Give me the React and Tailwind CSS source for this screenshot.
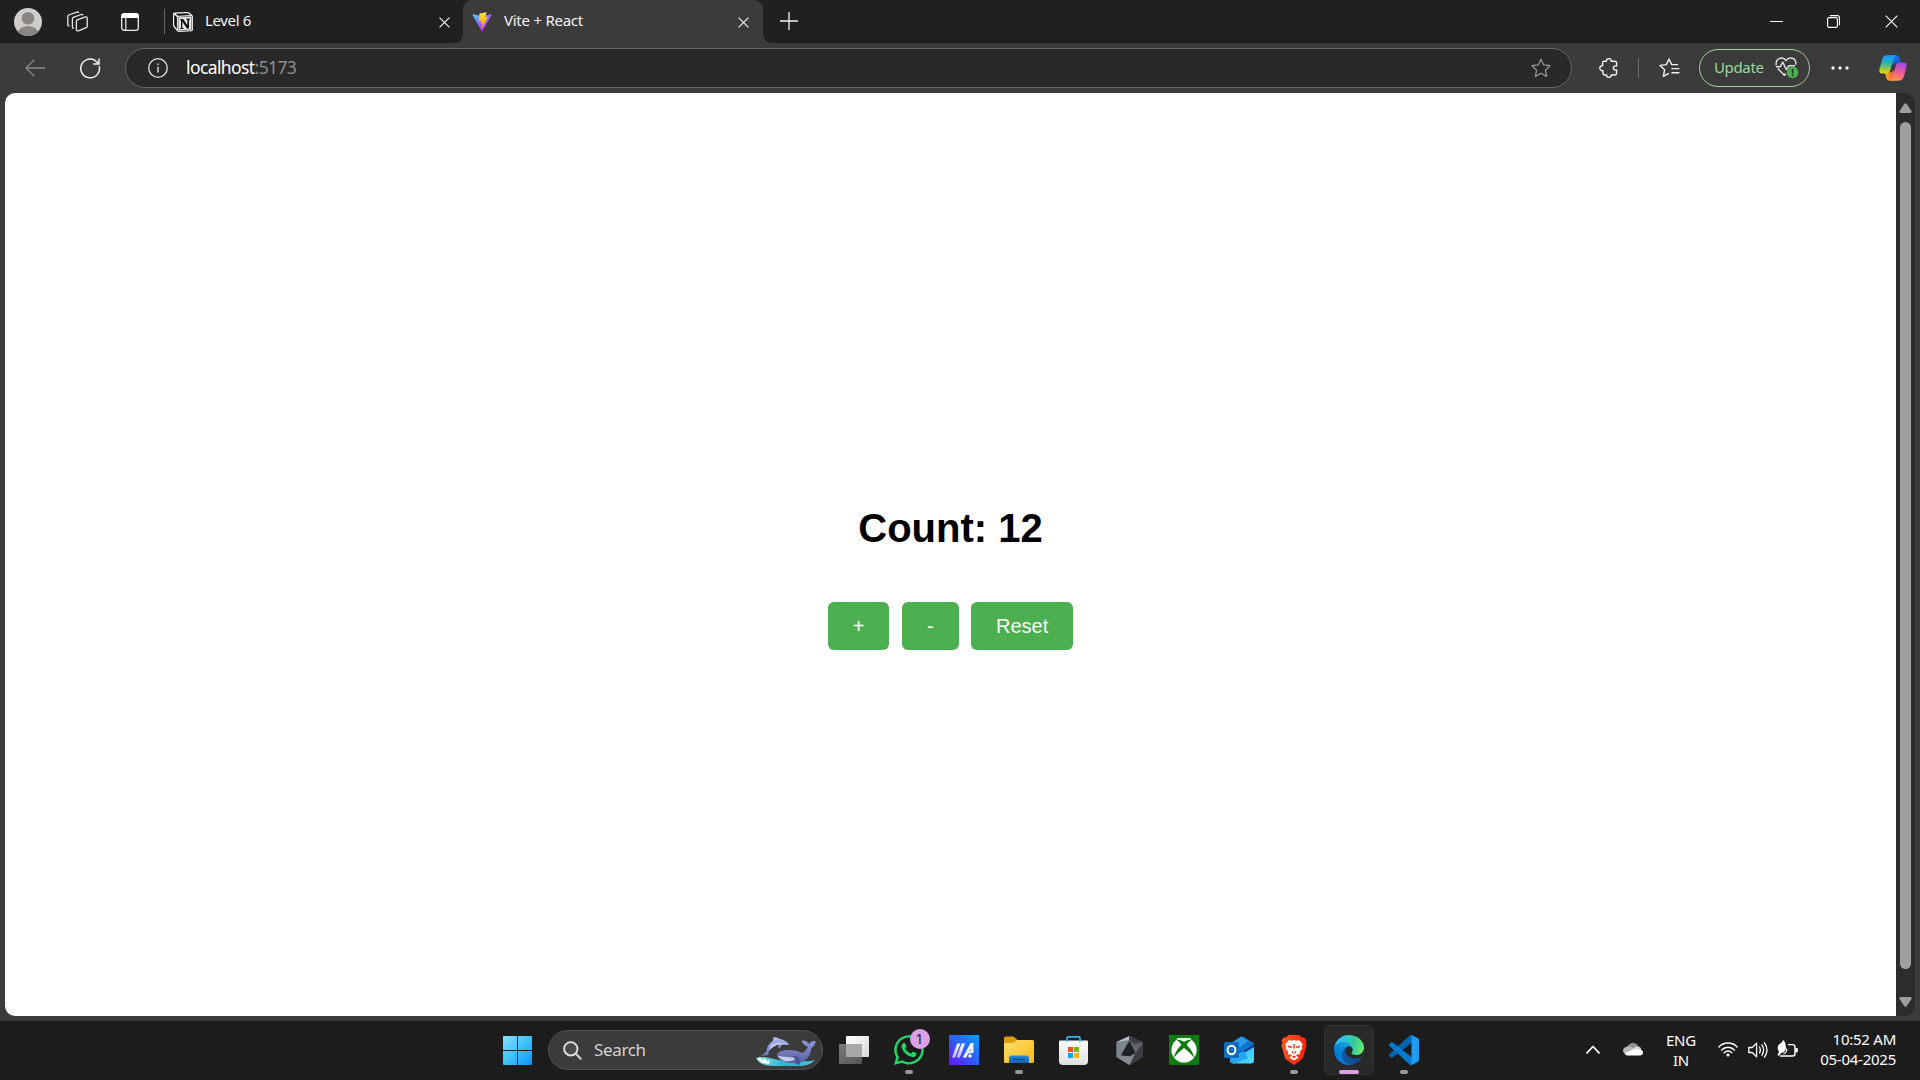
import React from "react";
import { FaWhatsapp } from "react-icons/fa";

const UI = "font-['Noto_Sans','Open_Sans',sans-serif]";

function XIcon({ size = 11, w = 1.3 }) {
  return (
    <svg width={size} height={size} viewBox="0 0 12 12" fill="none" stroke="#f2f2f2" strokeWidth={w} className="block">
      <path d="M0.6 0.6L11.4 11.4M11.4 0.6L0.6 11.4" />
    </svg>
  );
}

function NotionLogo() {
  return (
    <svg width="20" height="20" viewBox="0 0 20 20" className="block shrink-0">
      <path d="M1.500 0.500L14 0Q15.300 0 16.200 0.600L19.200 2.900Q20 3.500 20 4.600V17.500Q20 19.200 18.300 19.300L6 20Q4.800 20 4 19.100L0.700 15Q0 14.100 0 13V2Q0 0.700 1.500 0.500Z" fill="#f7f7f7" />
      <path d="M2.200 1.800L13.800 1.200Q14.600 1.200 15.200 1.600L17.300 3L5.600 3.700Q4.900 3.700 4.300 3.300Z" fill="#111" />
      <path d="M1.200 2.800L3.500 4.600Q3.900 5 3.900 5.700V17L1.600 14.100Q1.200 13.600 1.200 13Z" fill="#111" />
      <path d="M5.200 5.600Q5.200 5 5.900 5L18 4.300Q18.700 4.300 18.700 5V17.300Q18.700 18 18 18L6 18.700Q5.200 18.700 5.200 18Z" fill="#e9e9e9" stroke="#111" strokeWidth="0.500" />
      <path d="M7 7.200L10.200 7L14.400 13.200V7.800L13.100 7.500V6.800L17 6.500V7.300L16 7.700V16.200L14.100 16.600L9.300 9.700V15.800L10.800 16.100V16.800L6.900 17V16.300L8 15.900V8.300L7 8Z" fill="#0b0b0b" />
    </svg>
  );
}

function ViteLogo() {
  return (
    <svg width="20" height="20" viewBox="0 0 410 404" className="block">
      <defs>
        <linearGradient id="va" x1="6" y1="33" x2="235" y2="344" gradientUnits="userSpaceOnUse">
          <stop stopColor="#41D1FF" />
          <stop offset="1" stopColor="#BD34FE" />
        </linearGradient>
        <linearGradient id="vb" x1="194" y1="9" x2="236" y2="293" gradientUnits="userSpaceOnUse">
          <stop stopColor="#FFEA83" />
          <stop offset="0.08" stopColor="#FFDD35" />
          <stop offset="1" stopColor="#FFA800" />
        </linearGradient>
      </defs>
      <path fill="url(#va)" d="M399.641 59.5246L215.643 388.545C211.844 395.338 202.084 395.378 198.228 388.618L10.5817 59.5563C6.38087 52.1896 12.6802 43.2665 21.0281 44.7586L205.223 77.6824C206.398 77.8924 207.601 77.8904 208.776 77.6763L389.119 44.8058C397.439 43.2894 403.768 52.1434 399.641 59.5246Z" />
      <path fill="url(#vb)" d="M292.965 1.5744L156.801 28.2552C154.563 28.6937 152.906 30.5903 152.771 32.8664L144.395 174.33C144.198 177.662 147.258 180.248 150.51 179.498L188.42 170.749C191.967 169.931 195.172 173.055 194.443 176.622L183.18 231.775C182.422 235.487 185.907 238.661 189.532 237.56L212.947 230.446C216.577 229.344 220.065 232.527 219.297 236.242L201.398 322.875C200.278 328.294 207.486 331.249 210.492 326.603L212.5 323.5L323.454 102.072C325.312 98.3645 322.108 94.137 318.036 94.9228L279.014 102.454C275.347 103.161 272.227 99.746 273.262 96.1583L298.731 7.86689C299.767 4.27314 296.636 0.855181 292.965 1.5744Z" />
    </svg>
  );
}

function TabStrip() {
  return (
    <div className={`flex h-[43px] bg-[#202020] text-[15px] text-[#f3f3f3] ${UI}`}>
      <div className="flex w-[164px] items-center pl-[14px]">
        <svg width="28" height="28" viewBox="0 0 28 28" className="mr-[25px] shrink-0">
          <defs><clipPath id="avatar"><circle cx="14" cy="14" r="14" /></clipPath></defs>
          <g clipPath="url(#avatar)">
            <rect width="28" height="28" fill="#cfcdca" />
            <circle cx="14" cy="10.3" r="6.3" fill="#8a8683" />
            <ellipse cx="14" cy="26" rx="10.5" ry="8" fill="#8a8683" />
          </g>
        </svg>
        <svg width="21" height="21" viewBox="0 0 21 21" fill="none" stroke="#e8e8e8" strokeWidth="1.3" strokeLinejoin="round" className="mr-[33px] shrink-0">
          <path d="M9.4 10.2Q9.4 9.2 10.3 8.8L18.4 5.9Q20.2 5.5 20.2 7V15.2Q20.2 16.3 19.2 16.7L11.4 19.8Q9.4 20.3 9.4 18.6Z" />
          <path d="M6.9 17.2Q5.4 17.5 5.4 16V7.8Q5.4 6.8 6.3 6.4L14.2 3.5Q15.6 3.2 15.9 4.3" />
          <path d="M2.6 14.9Q0.8 15.2 0.8 13.4V5.4Q0.8 4.4 1.8 4L9.8 1.1Q11.4 0.7 11.8 1.9" />
        </svg>
        <svg width="18" height="18" viewBox="0 0 18 18" fill="none" className="shrink-0">
          <rect x="0.7" y="0.7" width="16.6" height="16.6" rx="2.6" stroke="#eee" strokeWidth="1.3" />
          <path d="M0.3 5V3Q0.3 0.3 3 0.3H15Q17.7 0.3 17.7 3V5Z" fill="#fff" />
          <path d="M4.8 5V17" stroke="#eee" strokeWidth="1.2" />
        </svg>
      </div>
      <div className="mt-[9px] h-[25px] w-px bg-[#6a6a6a]" />
      <div className="flex w-[298px] items-center pl-[8px]">
        <NotionLogo />
        <span className="-mt-[3px] ml-[12px] tracking-[-0.35px]">Level 6</span>
        <span className="mr-[13px] ml-auto mt-px"><XIcon /></span>
      </div>
      <div className="relative flex w-[300px] items-center rounded-t-[9px] bg-[#3b3b3b] pl-[9px]">
        <svg width="10" height="10" viewBox="0 0 10 10" className="absolute bottom-0 -left-[10px]"><path d="M10 0V10H0Q10 10 10 0Z" fill="#3b3b3b" /></svg>
        <svg width="10" height="10" viewBox="0 0 10 10" className="absolute -right-[10px] bottom-0"><path d="M0 0V10H10Q0 10 0 0Z" fill="#3b3b3b" /></svg>
        <ViteLogo />
        <span className="-mt-[3px] ml-[12px] tracking-[-0.25px]">Vite + React</span>
        <span className="mr-[14px] ml-auto mt-px"><XIcon /></span>
      </div>
      <div className="flex flex-1 items-center pl-[17px]">
        <svg width="18" height="18" viewBox="0 0 18 18" stroke="#f0f0f0" strokeWidth="1.3" className="-mt-px"><path d="M9 0V18M0 9H18" /></svg>
      </div>
      <div className="flex items-center pr-[22px]">
        <div className="mr-[44px] h-px w-[13px] bg-white" />
        <svg width="13" height="13" viewBox="0 0 13 13" fill="none" stroke="#fff" strokeWidth="1.1" className="mr-[45px]">
          <rect x="0.6" y="2.6" width="9.8" height="9.8" rx="1.5" />
          <path d="M2.8 0.6H10.4Q12.4 0.6 12.4 2.6V10.2" />
        </svg>
        <XIcon size={13} w={1.1} />
      </div>
    </div>
  );
}

const STAR = "M10 1.2L12.7 6.9L19 7.7L14.4 12.1L15.6 18.4L10 15.3L4.4 18.4L5.6 12.1L1 7.7L7.3 6.9Z";

function Copilot() {
  return (
    <svg width="28" height="26" viewBox="0 0 28 26" className="block">
      <defs>
        <linearGradient id="c1" x1="0" y1="0" x2="0" y2="1">
          <stop offset="0.1" stopColor="#1a9cf5" /><stop offset="0.45" stopColor="#2fb6a8" /><stop offset="0.75" stopColor="#9bc83c" /><stop offset="1" stopColor="#f5d60c" />
        </linearGradient>
        <linearGradient id="c2" x1="0.6" y1="0" x2="0.3" y2="1">
          <stop offset="0" stopColor="#a04be8" /><stop offset="0.5" stopColor="#ee5a96" /><stop offset="1" stopColor="#ff9a4d" />
        </linearGradient>
        <linearGradient id="c3" x1="0" y1="0" x2="1" y2="1">
          <stop offset="0" stopColor="#1b8ff0" /><stop offset="1" stopColor="#1a3fc4" />
        </linearGradient>
        <linearGradient id="c4" x1="0" y1="0" x2="1" y2="0">
          <stop offset="0" stopColor="#ffb02e" /><stop offset="1" stopColor="#f0503c" />
        </linearGradient>
      </defs>
      <path d="M14 0.3H17.5Q20 0.3 20.7 3L22 8H17Q14.6 8 13.8 10.5L12 7Z" fill="url(#c3)" />
      <path d="M14 25.7H10.5Q8 25.7 7.3 23L6 17.5H11Q13.4 17.5 14.2 15L16 19Z" fill="url(#c4)" />
      <path d="M8 0.3H17Q15.2 1 14.4 3.8L11.4 14.6Q10.4 18.6 7.4 18.6H3.4Q-0.6 18.6 0.5 14L3.1 4.4Q4.3 0.3 8 0.3Z" fill="url(#c1)" />
      <path d="M20 25.7H11Q12.8 25 13.6 22.2L16.6 11.4Q17.6 7.4 20.6 7.4H24.6Q28.6 7.4 27.5 12L24.9 21.6Q23.7 25.7 20 25.7Z" fill="url(#c2)" />
    </svg>
  );
}

function Toolbar() {
  return (
    <div className={`flex h-[50px] items-center bg-[#3b3b3b] ${UI}`}>
      <svg width="20" height="18" viewBox="0 0 20 18" fill="none" stroke="#8b8b8b" strokeWidth="1.3" className="ml-[25px] shrink-0"><path d="M20 9H1M9.5 0.6L1 9L9.5 17.4" /></svg>
      <svg width="21" height="21" viewBox="0 0 21 21" fill="none" stroke="#f0f0f0" strokeWidth="1.5" className="ml-[35px] shrink-0">
        <path d="M19.2 8A9.4 9.4 0 1 1 14.6 2.2L18.9 5.6M19 0.4V6H13.2" />
      </svg>
      <div className="ml-[24px] flex h-[40px] w-[1447px] shrink-0 items-center rounded-full border border-[#666] bg-[#292929] pr-[20px] pl-[22px]">
        <svg width="20" height="20" viewBox="0 0 20 20" fill="none" stroke="#dedede" strokeWidth="1.3">
          <circle cx="10" cy="10" r="9.3" /><path d="M10 8.8V14.6M10 5.4V7" strokeWidth="1.5" />
        </svg>
        <span className="-mt-px ml-[18px] text-[17.5px] tracking-[-0.6px] text-white">localhost<span className="text-[#8e8e8e]">:5173</span></span>
        <svg width="20" height="20" viewBox="0 0 20 20" fill="none" stroke="#9a9a9a" strokeWidth="1.2" strokeLinejoin="round" className="ml-auto"><path d={STAR} /></svg>
      </div>
      <svg width="19" height="20" viewBox="0 0 19 20" fill="none" stroke="#f0f0f0" strokeWidth="1.4" strokeLinejoin="round" className="ml-[27px] shrink-0">
        <path d="M4.8 3.2H7.4C7.2 -0.2 12.4 -0.2 12.2 3.2H15.6Q17.6 3.2 17.6 5.2V8C13.2 7.2 13.2 12.8 17.6 12V15Q17.6 17 15.6 17H12.2C12.4 20.2 7.4 20.2 7.6 17H6Q4 17 4 15V12.8C-0.2 13 -0.2 7.6 3.6 7.8V5Q3.6 3.2 4.8 3.2Z" />
      </svg>
      <div className="ml-[20px] h-[20px] w-px shrink-0 bg-[#6e6e6e]" />
      <svg width="21" height="20" viewBox="0 0 21 20" fill="none" stroke="#f0f0f0" strokeWidth="1.4" strokeLinejoin="round" className="ml-[20px] shrink-0">
        <path d="M19 6.6H12.7L10 1L7.3 6.6L1 7.4L5.6 11.8L4.4 18.4L9.8 15.4M12.4 10.6H20.4M12.4 14.8H20.4" />
      </svg>
      <div className="ml-[19px] flex h-[38px] w-[111px] shrink-0 items-center rounded-full border-[1.5px] border-[#9ad29a] pl-[14px] text-[15px] text-[#9fd89f]">
        <span className="-mt-[2px] tracking-[-0.35px]">Update</span>
        <svg width="24" height="22" viewBox="0 0 24 22" fill="none" className="ml-auto mr-[10px]">
          <path d="M11 17.8L9.6 16.6M1.2 8.4C0.2 0.4 8 -0.8 11 3.6C14 -0.8 21.6 0.4 20.8 7.6M2.8 11.4L9.8 18.8M1 9.8H5.2L7.8 5.2L11.4 12.6L13.8 8.8H20" stroke="#e4e4e4" strokeWidth="1.4" strokeLinejoin="round" />
          <circle cx="17.6" cy="15.4" r="5.8" fill="#4cb04f" />
          <path d="M17.6 12V16.4M17.6 17.5V19.2" stroke="#173a18" strokeWidth="1.6" />
        </svg>
      </div>
      <svg width="18" height="4" viewBox="0 0 18 4" fill="#f0f0f0" className="ml-[21px] shrink-0"><circle cx="2" cy="2" r="1.7" /><circle cx="9" cy="2" r="1.7" /><circle cx="16" cy="2" r="1.7" /></svg>
      <div className="ml-[30px] shrink-0"><Copilot /></div>
    </div>
  );
}

function CounterButton({ children }) {
  return <button className="h-[48px] rounded-[6px] bg-[#4caf50] px-[25px] text-[20px] leading-none text-white">{children}</button>;
}

function Page() {
  return (
    <div className="flex h-[928px] bg-[#3b3b3b] px-[5px] pb-[5px]">
      <div className="flex w-[1891px] flex-col items-center rounded-l-[10px] bg-white font-['Liberation_Sans',Arial,sans-serif]">
        <h1 className="mt-[412px] text-[40px] leading-[46px] font-bold text-black">Count: 12</h1>
        <div className="mt-[51px] flex gap-[12.5px]">
          <CounterButton>+</CounterButton>
          <CounterButton>-</CounterButton>
          <CounterButton>Reset</CounterButton>
        </div>
      </div>
      <div className="flex w-[19px] flex-col items-center rounded-r-[10px] bg-[#2c2c2c]">
        <svg width="13" height="10" viewBox="0 0 13 10" fill="#9f9f9f" className="mt-[10px]"><path d="M5.4 0.8Q6.5 -0.4 7.6 0.8L12.5 8Q13 10 11.4 10H1.6Q0 10 0.5 8Z" /></svg>
        <div className="mt-[9px] h-[847px] w-[11px] rounded-full bg-[#9f9f9f]" />
        <svg width="13" height="10" viewBox="0 0 13 10" fill="#9f9f9f" className="mt-[28px]"><path d="M5.4 9.2Q6.5 10.4 7.6 9.2L12.5 2Q13 0 11.4 0H1.6Q0 0 0.5 2Z" /></svg>
      </div>
    </div>
  );
}

function WindowsLogo() {
  return (
    <svg width="29" height="29" viewBox="0 0 29 29" className="block">
      <defs><linearGradient id="w" x1="0" y1="0" x2="29" y2="29" gradientUnits="userSpaceOnUse"><stop stopColor="#86e1ff" /><stop offset="0.5" stopColor="#3fc3fb" /><stop offset="1" stopColor="#0a93f5" /></linearGradient></defs>
      <path fill="url(#w)" d="M1 0H14V14H0V1Q0 0 1 0ZM15 0H28Q29 0 29 1V14H15ZM0 15H14V29H1Q0 29 0 28ZM15 15H29V28Q29 29 28 29H15Z" />
    </svg>
  );
}

function Dolphins() {
  return (
    <svg width="60" height="31" viewBox="0 0 60 31" className="block">
      <defs>
        <linearGradient id="d1" x1="0" y1="0" x2="0" y2="1"><stop stopColor="#b3bdf0" /><stop offset="1" stopColor="#6a76b8" /></linearGradient>
        <linearGradient id="d2" x1="0" y1="0" x2="0" y2="1"><stop stopColor="#8f97d8" /><stop offset="1" stopColor="#565e9f" /></linearGradient>
        <linearGradient id="d3" x1="0" y1="0" x2="1" y2="0"><stop stopColor="#7fe0ea" /><stop offset="0.5" stopColor="#2fb1cf" /><stop offset="1" stopColor="#49c4da" /></linearGradient>
      </defs>
      <path d="M0 22Q6 20 14 22Q30 26 44 25Q54 26 59 24Q54 30 42 30H18Q4 30 0 22Z" fill="url(#d3)" />
      <path d="M1 23L4 21L6 24L9 22L11 25L14 24L13 28L6 27Z" fill="#e8fbfd" />
      <path d="M33.5 9Q30 4 24 3Q21 1 17 1Q18 3 16.5 5Q11 9 10.5 15Q9 18 4.5 20Q10 19 12 19Q13 17.5 12.5 15.5Q17 9.5 23 8.5L22 12.5Q25 11.5 26 8.7Q30 9.3 33.5 9Z" fill="url(#d1)" />
      <path d="M15 9Q21 5.5 31 8Q25 7.5 21 9Q16 11 13 15Z" fill="#d9def8" opacity="0.7" />
      <path d="M21 18Q24 14 32 14Q41 14 46 17Q50 15 52 11Q47 9 45.5 4.5Q51 4 53 8Q55 4.5 59.5 5Q59.5 10 55.5 12Q55 21 47 25.5Q36 29 27 25Q21 22 21 18Z" fill="url(#d2)" />
      <path d="M22 20Q31 21 41 22Q36 26 29 25Q23 23 22 20Z" fill="#c6cbec" />
      <path d="M36 20Q40 22 40 28L44 29Q44 23 41 20Z" fill="#4c5494" />
    </svg>
  );
}

function TaskViewIcon() {
  return (
    <svg width="30" height="28" viewBox="0 0 30 28">
      <defs>
        <linearGradient id="tv" x1="0" y1="0" x2="1" y2="1"><stop stopColor="#ffffff" /><stop offset="1" stopColor="#d8d8d8" /></linearGradient>
        <linearGradient id="tw" x1="0" y1="0" x2="1" y2="1"><stop stopColor="#7a7a7a" /><stop offset="1" stopColor="#555" /></linearGradient>
      </defs>
      <rect x="7" y="0" width="23" height="21" rx="1" fill="url(#tv)" />
      <rect x="0" y="8" width="23" height="20" rx="1" fill="url(#tw)" />
      <rect x="7" y="8" width="16" height="13" fill="#a8a8a8" />
    </svg>
  );
}

function MyAsusIcon() {
  return (
    <svg width="30" height="30" viewBox="0 0 30 30">
      <defs>
        <linearGradient id="ma" x1="0" y1="1" x2="1" y2="0"><stop stopColor="#6a12ff" /><stop offset="0.5" stopColor="#2f5cff" /><stop offset="1" stopColor="#00a3ff" /></linearGradient>
        <linearGradient id="mb" x1="0" y1="0" x2="0" y2="1"><stop stopColor="#fff" /><stop offset="1" stopColor="#b9b6ff" /></linearGradient>
      </defs>
      <rect width="30" height="30" fill="url(#ma)" />
      <path d="M8.2 8.5H11.4L6.2 22.5H3ZM12.6 8.500H16L10.800 22.500H7.600Z" fill="url(#mb)" />
      <path d="M21.6 8H24.400V18H21.600V13.500L17.200 22.500H13.800Z" fill="#fff" />
      <path d="M17.6 16H22V18.600H16.400Z" fill="#dfe2ff" />
      <circle cx="21" cy="21" r="1.7" fill="#fff" />
    </svg>
  );
}

function FolderIcon() {
  return (
    <svg width="30" height="28" viewBox="0 0 30 28">
      <defs>
        <linearGradient id="fo" x1="0" y1="0" x2="1" y2="1"><stop stopColor="#ffdf70" /><stop offset="1" stopColor="#f9b813" /></linearGradient>
        <linearGradient id="fb" x1="0" y1="0" x2="0" y2="1"><stop stopColor="#1f8fe0" /><stop offset="1" stopColor="#0d62b4" /></linearGradient>
      </defs>
      <path d="M0 2Q0 0.5 1.5 0.5H9.5L13 3.5V10H0Z" fill="#dd9d0c" />
      <path d="M0 7H9L13 4H28.5Q30 4 30 5.5V25.5Q30 27 28.5 27H1.5Q0 27 0 25.5Z" fill="url(#fo)" />
      <path d="M5 27V22Q5 19.5 7.5 19.5H22.5Q25 19.5 25 22V27Z" fill="url(#fb)" />
      <rect x="9" y="22.8" width="12" height="1.2" rx="0.5" fill="#0a4a8c" />
    </svg>
  );
}

function StoreIcon() {
  return (
    <svg width="29" height="30" viewBox="0 0 29 30" className="-translate-x-px">
      <defs><linearGradient id="st" x1="0" y1="0" x2="0" y2="1"><stop stopColor="#fff" /><stop offset="1" stopColor="#dfdfdf" /></linearGradient></defs>
      <path d="M1 5.5H28Q29 5.5 29 6.5V26Q29 30 25 30H4Q0 30 0 26V6.5Q0 5.5 1 5.5Z" fill="url(#st)" />
      <path d="M8 7V3Q8 1.8 9.2 1.8H19.8Q21 1.8 21 3V7" fill="none" stroke="#31b8ea" strokeWidth="1.7" />
      <rect x="9" y="12" width="5" height="5" fill="#f25022" /><rect x="15" y="12" width="5" height="5" fill="#7fba00" />
      <rect x="9" y="18" width="5" height="5" fill="#00a4ef" /><rect x="15" y="18" width="5" height="5" fill="#ffb900" />
    </svg>
  );
}

function ArmouryIcon() {
  return (
    <svg width="27" height="29" viewBox="0 0 27 29">
      <path d="M13.5 0L0.5 6V21L13.5 29L26.5 21V6Z" fill="#5c6167" />
      <path d="M13.5 0L0.5 6L4 9L13 4Z" fill="#b9c2cb" />
      <path d="M13.5 0L26.5 6L18 9L13 4Z" fill="#3c4046" />
      <path d="M0.5 6L13 4L4 20L0.5 21Z" fill="#7d858e" />
      <path d="M13.5 5L19.5 17L14 20.500L5 19.500Z" fill="#1d2024" />
      <path d="M5 19.5L14 20.5L19.5 17L13.5 29L0.5 21Z" fill="#868c93" />
      <path d="M19.500 17L26.5 8V21L13.5 29Z" fill="#3a3e43" />
      <path d="M13 4L18 8L26.5 7L19.500 17Z" fill="#5d6268" />
    </svg>
  );
}

function XboxIcon() {
  return (
    <svg width="30" height="30" viewBox="0 0 30 30">
      <rect width="30" height="30" rx="2" fill="#107c10" />
      <circle cx="15" cy="15" r="12.6" fill="#fff" />
      <path d="M7.6 4.6Q10.5 4.6 15 8.2Q19.5 4.6 22.4 4.6L20 1.5H10Z" fill="#fff" />
      <path d="M0 0H30V3H0Z" fill="#107c10" />
      <path d="M7.4 4.8Q11 4.1 15 6.8Q19 4.1 22.6 4.8Q19.600 6.600 17.600 9.800Q23.900 16 25.400 23.200Q22 18.500 15 13Q8 18.500 4.600 23.200Q6.100 16 12.400 9.800Q10.400 6.600 7.400 4.800Z" fill="#107c10" />
    </svg>
  );
}

function OutlookIcon() {
  return (
    <svg width="30" height="28" viewBox="0 0 30 28">
      <defs><linearGradient id="ol" x1="0" y1="0" x2="1" y2="1"><stop stopColor="#1fb4f4" /><stop offset="1" stopColor="#56dcfb" /></linearGradient></defs>
      <path d="M6 7.5L17 0.5Q18 0 19 0.5L30 7.5V18H6Z" fill="#1374d0" />
      <path d="M6 8L17 1L24 5L12 14H6Z" fill="#2a9de8" />
      <path d="M15 18L30 8V13L20 20Z" fill="#0b3f8f" />
      <path d="M6 16L18 18L30 11V24Q30 27.5 26.5 27.5H9.5Q6 27.5 6 24Z" fill="url(#ol)" />
      <path d="M6 22L20 15L24 22L10 27.5Q6 27.5 6 24Z" fill="#26a6ee" />
      <rect x="0" y="6" width="15" height="16" rx="1.5" fill="#0f6cbd" />
      <ellipse cx="7.5" cy="14" rx="3.9" ry="4.3" fill="none" stroke="#fff" strokeWidth="2" />
    </svg>
  );
}

function BraveIcon() {
  return (
    <svg width="26" height="30" viewBox="0 0 26 30">
      <defs><linearGradient id="br" x1="0" y1="0" x2="1" y2="0.3"><stop stopColor="#ff5b26" /><stop offset="1" stopColor="#ff2408" /></linearGradient></defs>
      <path d="M7.5 0H18.500L20.800 2.600L23.200 2.400L25.400 5.200L24.600 7.800L25.600 10.400L22.300 22Q21.900 23.600 20.600 24.600L14 29.400Q13 30.200 12 29.400L5.400 24.600Q4.100 23.600 3.700 22L0.400 10.400L1.400 7.800L0.600 5.200L2.800 2.400L5.200 2.600Z" fill="url(#br)" />
      <path d="M8 5L10.500 5.700L13 5.100L15.500 5.700L18 5L21.800 9.300L20.800 11.200L21.300 13.600L18.600 17.200L19.200 19.400L16.600 19.200L14.900 20.600L17.800 22.400L13 25.600L8.200 22.400L11.100 20.600L9.400 19.200L6.800 19.400L7.400 17.200L4.700 13.600L5.200 11.200L4.200 9.300Z" fill="#fff" />
      <path d="M6.600 10.500L11.200 11.600L10.800 13L7.400 12.600ZM19.400 10.500L14.800 11.600L15.200 13L18.600 12.600ZM12.300 9H13.700L14 15.500L15.700 17.200L13 18.800L10.300 17.200L12 15.500ZM10.800 21.800L13 20.600L15.200 21.800L13 23.400Z" fill="#fb3f18" />
      <path d="M12.500 13H13.500L14.200 17L13 17.700L11.800 17Z" fill="#fff" />
    </svg>
  );
}

function EdgeIcon() {
  return (
    <svg width="30" height="30" viewBox="0 0 256 256">
      <defs>
        <linearGradient id="e1" x1="63" y1="178" x2="241" y2="178" gradientUnits="userSpaceOnUse"><stop stopColor="#0c59a4" /><stop offset="1" stopColor="#114a8b" /></linearGradient>
        <linearGradient id="e2" x1="157" y1="100" x2="46" y2="221" gradientUnits="userSpaceOnUse"><stop stopColor="#1b9de2" /><stop offset="0.2" stopColor="#1595df" /><stop offset="0.67" stopColor="#0680d7" /><stop offset="1" stopColor="#0078d4" /></linearGradient>
        <linearGradient id="e3" x1="10" y1="60" x2="255" y2="110" gradientUnits="userSpaceOnUse"><stop stopColor="#35c1f1" /><stop offset="0.3" stopColor="#2fc2df" /><stop offset="0.65" stopColor="#36c99c" /><stop offset="1" stopColor="#66eb6e" /></linearGradient>
      </defs>
      <g transform="translate(-4.63 -4.92)">
        <path fill="url(#e1)" d="M235.68 195.46a93.73 93.73 0 0 1-10.54 4.71 101.87 101.87 0 0 1-35.9 6.46c-47.32 0-88.54-32.55-88.54-74.32A31.48 31.48 0 0 1 117.13 105c-42.8 1.8-53.8 46.4-53.8 72.53 0 73.88 68.09 81.37 82.76 81.37 7.91 0 19.84-2.3 27-4.56l1.31-.44a128.34 128.34 0 0 0 66.6-52.8 4 4 0 0 0-5.32-5.64Z" />
        <path fill="url(#e2)" d="M110.34 246.34A79.2 79.2 0 0 1 87.6 225a80.72 80.72 0 0 1 29.53-120c3.12-1.47 8.45-4.13 15.54-4a32.35 32.35 0 0 1 25.69 13 31.88 31.88 0 0 1 6.36 18.66c0-.21 24.46-79.6-80-79.6-43.9 0-80 41.66-80 78.21a130.15 130.15 0 0 0 12.11 56 128 128 0 0 0 156.38 67.11 75.55 75.55 0 0 1-62.78-8.04Z" />
        <path fill="url(#e3)" d="M156.94 153.78c-.81 1.05-3.3 2.5-3.3 5.66 0 2.61 1.7 5.12 4.72 7.23 14.38 10 41.49 8.68 41.56 8.68a59.56 59.56 0 0 0 30.27-8.35 61.38 61.38 0 0 0 30.43-52.88c.26-22.41-8-37.31-11.34-43.91-21.19-41.45-66.93-65.29-116.67-65.29a128 128 0 0 0-128 126.2c.48-36.54 36.8-66.05 80-66.05 3.5 0 23.46.34 42 10.07 16.34 8.58 24.9 18.94 30.85 29.21 6.18 10.67 7.28 24.15 7.28 29.52s-2.74 13.33-7.8 19.91Z" />
      </g>
    </svg>
  );
}

function VSCodeIcon() {
  return (
    <svg width="30" height="30" viewBox="0 0 100 100">
      <path fill="#0065A9" d="M96.4614 10.7962L75.8569 0.875542C73.4719 -0.272773 70.6217 0.211611 68.75 2.08333L1.29858 63.5832C-0.515693 65.2373 -0.513607 68.0937 1.30308 69.7452L6.81272 74.754C8.29793 76.1042 10.5347 76.2036 12.1338 74.9905L93.3609 13.3699C96.086 11.3026 100 13.2462 100 16.6667V16.4275C100 14.0265 98.6246 11.8378 96.4614 10.7962Z" />
      <path fill="#007ACC" d="M96.4614 89.2038L75.8569 99.1245C73.4719 100.273 70.6217 99.7884 68.75 97.9167L1.29858 36.4169C-0.515693 34.7627 -0.513607 31.9063 1.30308 30.2548L6.81272 25.246C8.29793 23.8958 10.5347 23.7964 12.1338 25.0095L93.3609 86.6301C96.086 88.6974 100 86.7538 100 83.3334V83.5726C100 85.9735 98.6246 88.1622 96.4614 89.2038Z" />
      <path fill="#1F9CF0" d="M75.8578 99.1263C73.4721 100.274 70.6219 99.7885 68.75 97.9166C71.0564 100.223 75 98.5895 75 95.3278V4.67213C75 1.41039 71.0564 -0.223106 68.75 2.08329C70.6219 0.211402 73.4721 -0.273666 75.8578 0.873633L96.4587 10.7807C98.6234 11.8217 100 14.0112 100 16.4132V83.5871C100 85.9891 98.6234 88.1786 96.4586 89.2196L75.8578 99.1263Z" />
    </svg>
  );
}

function TaskbarItem({ children, dot, active }) {
  return (
    <div className="relative flex w-[55px] justify-center">
      <div className={active ? "mt-[4px] flex h-[50px] w-[50px] items-center justify-center rounded-[6px] border border-[#333] bg-[#292929]" : "mt-[4px] flex h-[50px] w-[50px] items-center justify-center"}>
        {children}
      </div>
      {dot && <div className="absolute top-[49px] h-[4px] w-[8px] rounded-full bg-[#9a9a9a]" />}
      {active && <div className="absolute top-[49px] h-[4px] w-[20px] rounded-full bg-[#dc9fe3]" />}
    </div>
  );
}

function Taskbar() {
  return (
    <div className={`flex h-[59px] bg-[#1c1c1c] text-white ${UI}`}>
      <div className="mt-[15px] ml-[503px]"><WindowsLogo /></div>
      <div className="mt-[9px] ml-[16px] flex h-[40px] w-[275px] items-center rounded-full border border-[#505050] bg-[#3b3b3b] pr-[6px] pl-[14px]">
        <svg width="19" height="19" viewBox="0 0 19 19" fill="none"><circle cx="7.8" cy="7.8" r="6.7" stroke="#e0e0e0" strokeWidth="1.9" fill="#4a4a4a" /><path d="M12.6 12.6L17.6 17.8" stroke="#cfcfcf" strokeWidth="2.2" strokeLinecap="round" /></svg>
        <span className="ml-[12px] text-[17px] tracking-[-0.35px] text-[#d2d2d2]">Search</span>
        <div className="mt-[3px] ml-auto"><Dolphins /></div>
      </div>
      <div className="ml-[3.5px] flex">
        <TaskbarItem><TaskViewIcon /></TaskbarItem>
        <TaskbarItem dot>
          <FaWhatsapp size={34} color="#25d366" className="-ml-px shrink-0" />
          <span className="absolute top-[8px] right-[7px] flex h-[20px] w-[20px] items-center justify-center rounded-full bg-[#dc9fe3] text-[14px] leading-none text-[#222]">1</span>
        </TaskbarItem>
        <TaskbarItem><MyAsusIcon /></TaskbarItem>
        <TaskbarItem dot><FolderIcon /></TaskbarItem>
        <TaskbarItem><StoreIcon /></TaskbarItem>
        <TaskbarItem><ArmouryIcon /></TaskbarItem>
        <TaskbarItem><XboxIcon /></TaskbarItem>
        <TaskbarItem><OutlookIcon /></TaskbarItem>
        <TaskbarItem dot><BraveIcon /></TaskbarItem>
        <TaskbarItem active><EdgeIcon /></TaskbarItem>
        <TaskbarItem dot><VSCodeIcon /></TaskbarItem>
      </div>
      <div className="mr-[24px] ml-auto flex text-[15px] leading-[20px]">
        <svg width="14" height="9" viewBox="0 0 14 9" fill="none" stroke="#fff" strokeWidth="1.7" strokeLinecap="round" strokeLinejoin="round" className="mt-[24px]"><path d="M1 7.8L7 1.5L13 7.8" /></svg>
        <svg width="20" height="14" viewBox="0 0 20 14" className="mt-[21px] ml-[23px]">
          <path d="M4.5 4.5A6 6 0 0 1 15.5 4.5L10 9Z" fill="#8e8e8e" />
          <path d="M4 4.5Q8 3.5 11 7L5 12Q0 12 0 8.5Q0 5.5 4 4.5Z" fill="#b9b9b9" />
          <path d="M9.5 7Q12 3.8 15.5 4.5Q18 5 18.5 7.5L12 11Z" fill="#d4d4d4" />
          <path d="M1.5 11.5L10 7.5Q13 6.5 15 7.5Q20 7.5 20 10.5Q20 13.5 16.5 13.5H4.5Q2.5 13.5 1.5 11.5Z" fill="#fff" />
        </svg>
        <div className="mt-[9px] ml-[20px] w-[36px] text-center tracking-[-0.2px]">ENG<br />IN</div>
        <svg width="20" height="16" viewBox="0 0 20 16" fill="none" stroke="#fff" strokeWidth="1.5" strokeLinecap="round" className="mt-[20px] ml-[19px]">
          <path d="M0.9 6A12.5 12.5 0 0 1 19.1 6M3.6 8.9A8.8 8.8 0 0 1 16.4 8.9M6.2 11.7A5.2 5.2 0 0 1 13.8 11.7" />
          <circle cx="10" cy="13.9" r="1.6" fill="#fff" stroke="none" />
        </svg>
        <svg width="20" height="18" viewBox="0 0 20 18" fill="none" stroke="#fff" strokeWidth="1.3" strokeLinecap="round" strokeLinejoin="round" className="mt-[20px] ml-[10px]">
          <path d="M0.8 6.5H4.2L8.6 2.2V15.8L4.2 11.5H0.8ZM11.5 6Q13.2 9 11.5 12M14 3.8Q17.2 9 14 14.2M16.5 1.8Q21.5 9 16.5 16.2" />
        </svg>
        <svg width="21" height="18" viewBox="0 0 21 18" fill="none" className="mt-[19px] ml-[9px]">
          <path d="M11 4.6H15.5Q18 4.6 18 7.1V13.5Q18 16 15.5 16H3" stroke="#fff" strokeWidth="1.4" />
          <rect x="18.2" y="8" width="2.6" height="4.6" rx="1" fill="#fff" />
          <path d="M6.5 0Q9 3 9 7Q9 12 4.5 13L1.5 16L0.5 15L2 12Q-1 7 2.5 4Q4.5 3 6.5 0Z" fill="#fff" />
          <path d="M9.5 8.5Q10.5 12 6.5 14" stroke="#fff" strokeWidth="1.2" />
        </svg>
        <div className="mt-[8px] w-[98px] text-right tracking-[-0.25px] whitespace-nowrap">10:52 AM<br />05-04-2025</div>
      </div>
    </div>
  );
}

export default function App() {
  return (
    <div className="h-[1080px] w-[1920px] overflow-hidden bg-[#1c1c1c]">
      <TabStrip />
      <Toolbar />
      <Page />
      <Taskbar />
    </div>
  );
}
